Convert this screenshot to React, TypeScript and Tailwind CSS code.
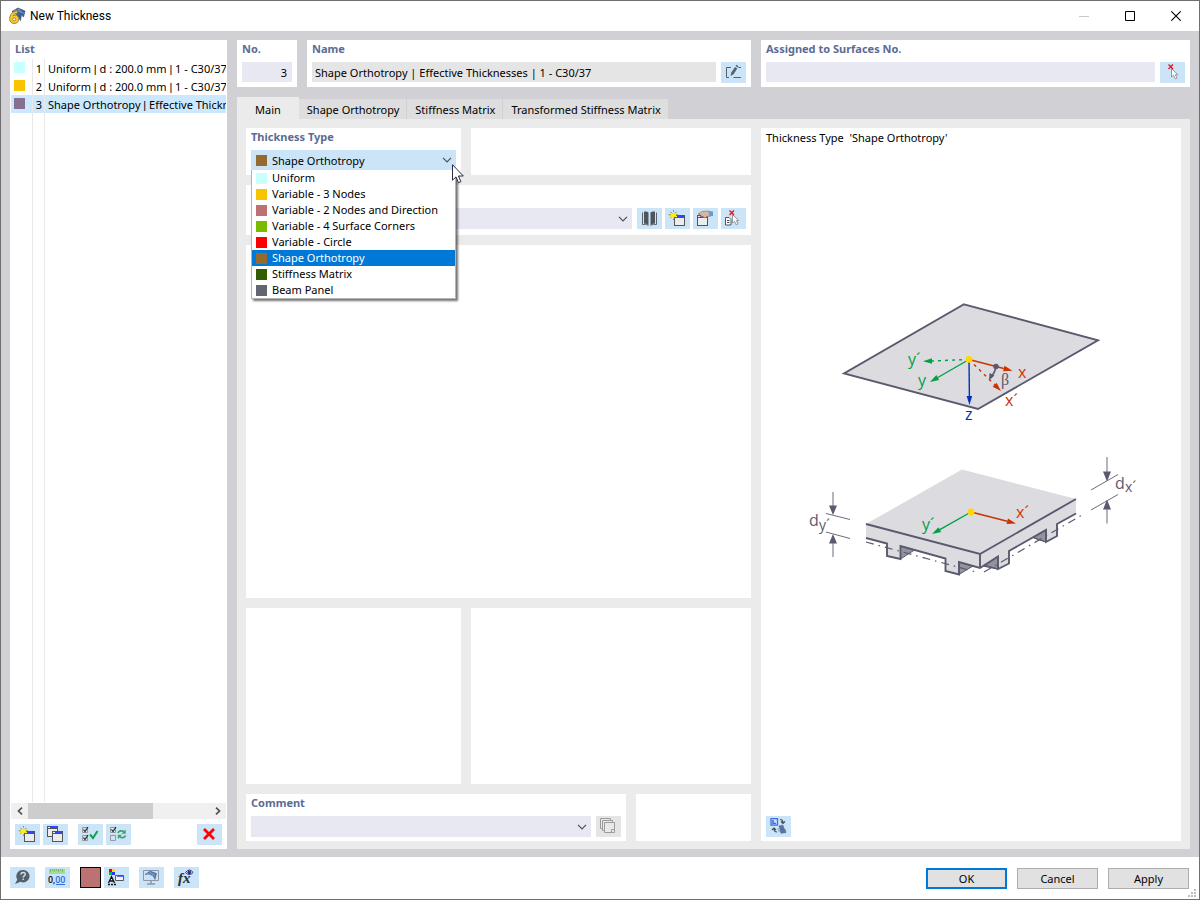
import { Fragment, useState, type KeyboardEvent, type ReactNode } from "react";

const thicknessTypes = [
  { name: "Uniform", swatch: "bg-[#c8ffff]" },
  { name: "Variable - 3 Nodes", swatch: "bg-[#f8c400]" },
  { name: "Variable - 2 Nodes and Direction", swatch: "bg-[#bc7272]" },
  { name: "Variable - 4 Surface Corners", swatch: "bg-[#7aba00]" },
  { name: "Variable - Circle", swatch: "bg-[#ff0000]" },
  { name: "Shape Orthotropy", swatch: "bg-[#946a2e]" },
  { name: "Stiffness Matrix", swatch: "bg-[#335c00]" },
  { name: "Beam Panel", swatch: "bg-[#62666e]" },
];

const listItems = [
  { no: 1, parts: ["Uniform ", " d : 200.0 mm ", " 1 - C30/37"], swatch: "bg-[#c8ffff]" },
  { no: 2, parts: ["Uniform ", " d : 200.0 mm ", " 1 - C30/37"], swatch: "bg-[#f8c400]" },
  { no: 3, parts: ["Shape Orthotropy ", " Effective Thicknesses"], swatch: "bg-[#85708f]" },
];

const tabs = ["Main", "Shape Orthotropy", "Stiffness Matrix", "Transformed Stiffness Matrix"];

function Icon({ children }: { children: ReactNode }) {
  return (
    <svg width="25" height="21" viewBox="0 0 25 21" fill="none" aria-hidden="true">
      {children}
    </svg>
  );
}

function Tool({ label, disabled, children }: { label: string; disabled?: boolean; children: ReactNode }) {
  return (
    <button
      type="button"
      aria-label={label}
      disabled={disabled}
      className={`h-[21px] w-[25px] shrink-0 ${disabled ? "bg-[#e5e5e5]" : "bg-[#cce4f7]"}`}
    >
      <Icon>{children}</Icon>
    </button>
  );
}

function Chevron() {
  return (
    <svg width="10" height="6" viewBox="0 0 10 6" fill="none" stroke="#505050" strokeWidth="1.2" aria-hidden="true">
      <path d="M1 .8 5 4.8 9 .8" />
    </svg>
  );
}

function MiniWindow({ x, y, s = 10 }: { x: number; y: number; s?: number }) {
  return (
    <g>
      <rect x={x + 0.5} y={y + 0.5} width={s} height={s} fill="#ececec" stroke="#555" />
      <path d={`M${x} ${y + 2.5}h${s + 1}`} stroke="#555" />
      <path d={`M${x + 3} ${y + 1}h${s - 3}`} stroke="#2b45ff" strokeWidth="2" />
    </g>
  );
}

function NewIcon() {
  return (
    <>
      <MiniWindow x={9} y={7} />
      <path d="M8.500 2v10M3.800 6.800h9.400M5.500 3.800l6 6M11.500 3.800l-6 6" stroke="#8f8a3a" strokeWidth="1" />
      <path d="m8.500 3 1 2.500 2.800-.5-1.500 2 1.500 2-2.800-.300-1 2.600-1-2.600-2.800.300 1.500-2-1.500-2 2.800.5z" fill="#fff200" />
    </>
  );
}

function Pointer() {
  return (
    <path
      d="M11.500 6.500v8.500l2-1.700 1.800 3.600 1.700-.9-1.700-3.300h2.600z"
      fill="#fff"
      stroke="#888c94"
      strokeWidth=".9"
    />
  );
}

function RedCross() {
  return <path d="m8.500 2.500 4.500 4.500m0-4.500L8.500 7" stroke="#e8101c" strokeWidth="1.3" />;
}

function CheckBoxes({ second }: { second: boolean }) {
  return (
    <g>
      <path d="M4.500 3.500h5v5h-5zM4.500 11.500h5v5h-5z" stroke="#999" />
      <path d="m5.500 5.500 1.500 2 3-4.500" stroke="#222" strokeWidth="1.100" />
      {second && <path d="m5.500 13.500 1.500 2 3-4.500" stroke="#222" strokeWidth="1.100" />}
    </g>
  );
}

function Panel({ className = "", children }: { className?: string; children?: ReactNode }) {
  return <section className={`min-w-0 bg-white ${className}`}>{children}</section>;
}

function Caption({ htmlFor, children }: { htmlFor: string; children: ReactNode }) {
  return (
    <label htmlFor={htmlFor} className="block h-[22px] pt-px text-[11px] leading-4 font-bold text-[#5c6b94]">
      {children}
    </label>
  );
}

function EmptySelect({ id, label }: { id: string; label?: string }) {
  return (
    <div className="relative min-w-0 flex-1">
      <select id={id} aria-label={label} className="block h-[21px] w-full appearance-none bg-[#e8e8f2] px-1 outline-none" />
      <span className="pointer-events-none absolute top-[8px] right-1">
        <Chevron />
      </span>
    </div>
  );
}

function AppLogo() {
  return (
    <svg width="18" height="18" viewBox="0 0 18 18" fill="none" aria-hidden="true">
      <path d="M4 4.500 10 1l7 3-1.500 6-2-2.500-1 6-4-6z" fill="#3f6295" stroke="#35507c" strokeWidth=".7" />
      <path d="M7 3l7 2.500M10 1.800l6 5M5 4.500l7-2" stroke="#8fa9cc" strokeWidth=".7" />
      <path
        d="M9.600 3.800C4.500 4.300 1.600 7.600 1.700 11.800c.1 3 1.900 4.700 4.500 4.700 2.700 0 4.600-1.800 4.600-4.400 0-2.300-1.500-3.900-3.600-3.900-.9 0-1.600.2-2.100.6.600-1.300 2-2.300 4.500-2.500z"
        fill="#fbcb2a"
        stroke="#8a701c"
        strokeWidth=".8"
      />
      <circle cx="6.200" cy="12.300" r="1.500" fill="#fff" stroke="#8a701c" strokeWidth=".8" />
    </svg>
  );
}

function TitleBar() {
  const control = "flex h-full w-[46px] items-center justify-center";
  return (
    <header className="flex h-[30px] shrink-0 items-center bg-white pl-[7px]">
      <AppLogo />
      <h1 className="ml-1 flex-1 font-['Roboto',sans-serif] text-[12px] leading-4">New Thickness</h1>
      <button type="button" aria-label="Minimize" disabled className={control}>
        <svg width="10" height="10" viewBox="0 0 10 10" stroke="#c8c8c8"><path d="M0 5.500h10" /></svg>
      </button>
      <button type="button" aria-label="Maximize" className={control}>
        <svg width="10" height="10" viewBox="0 0 10 10" fill="none" stroke="#000"><path d="M.5.5h9v9h-9z" /></svg>
      </button>
      <button type="button" aria-label="Close" className={control}>
        <svg width="10" height="10" viewBox="0 0 10 10" stroke="#000" strokeWidth="1.100"><path d="m.3.3 9.400 9.400m0-9.400L.3 9.700" /></svg>
      </button>
    </header>
  );
}

function ListPanel() {
  return (
    <Panel className="flex w-[217px] shrink-0 flex-col px-px pb-1">
      <h2 className="h-[19px] pt-px pl-1 text-[11px] leading-4 font-bold text-[#5c6b94]">List</h2>
      <div className="flex flex-1 flex-col overflow-hidden">
        <ul>
          {listItems.map((item) => (
            <li
              key={item.no}
              className={`flex h-[18px] text-[11px] leading-[20px] ${item.no === 3 ? "bg-[#cce8ff]" : ""}`}
            >
              <span className="w-[22px] shrink-0 border-r border-[#e8e8e8] pt-[3px] pl-[3px]">
                <span className={`block size-[11px] ${item.swatch}`} />
              </span>
              <span className="w-3 shrink-0 border-r border-[#e8e8e8] pr-0.5 text-right">{item.no}</span>
              <span className="overflow-hidden pl-[3px] whitespace-pre">
                {item.parts.map((part, i) => (
                  <Fragment key={i}>
                    {i > 0 && <span className="font-['Liberation_Sans',sans-serif]">|</span>}
                    {part}
                  </Fragment>
                ))}
              </span>
            </li>
          ))}
        </ul>
        <div className="flex flex-1">
          <span className="w-[22px] border-r border-[#e8e8e8]" />
          <span className="w-3 border-r border-[#e8e8e8]" />
        </div>
      </div>
      <div className="mt-px flex h-4 bg-[#f0f0f0]">
        <button type="button" aria-label="Scroll left" className="flex w-[17px] items-center justify-center">
          <svg width="6" height="8" viewBox="0 0 6 8" fill="none" stroke="#505050" strokeWidth="1.700"><path d="M5 .7 1.500 4 5 7.300" /></svg>
        </button>
        <div className="flex flex-1"><span className="w-[69%] bg-[#cdcdcd]" /></div>
        <button type="button" aria-label="Scroll right" className="flex w-[17px] items-center justify-center">
          <svg width="6" height="8" viewBox="0 0 6 8" fill="none" stroke="#505050" strokeWidth="1.700"><path d="M1 .7 4.500 4 1 7.300" /></svg>
        </button>
      </div>
      <div className="flex justify-between px-1 pt-[5px]">
        <div className="flex gap-[10px]">
          <div className="flex gap-[3px]">
            <Tool label="New"><NewIcon /></Tool>
            <Tool label="Copy"><MiniWindow x={4} y={2} /><MiniWindow x={9} y={7} /></Tool>
          </div>
          <div className="flex gap-[3px]">
            <Tool label="Select all">
              <CheckBoxes second />
              <path d="m12 10.500 3 3.500 4.500-7" stroke="#12a24b" strokeWidth="2" />
            </Tool>
            <Tool label="Invert selection">
              <CheckBoxes second={false} />
              <path d="M12 9c.8-2.200 3.500-2.700 6-1.400M19.500 11.500c-.8 2.200-3.500 2.700-6 1.400" stroke="#3aa66a" strokeWidth="1.800" />
              <path d="M19.700 5.500v4.200h-4.200zM11.800 15v-4.200H16z" fill="#3aa66a" />
            </Tool>
          </div>
        </div>
        <Tool label="Delete"><path d="m7 5 10 10M17 5 7 15" stroke="#f00" strokeWidth="2.800" /></Tool>
      </div>
    </Panel>
  );
}

function ThicknessTypeField() {
  const [open, setOpen] = useState(true);
  const [value, setValue] = useState("Shape Orthotropy");
  const index = thicknessTypes.findIndex((t) => t.name === value);

  function onKeyDown(e: KeyboardEvent) {
    const step = e.key === "ArrowDown" ? 1 : e.key === "ArrowUp" ? -1 : 0;
    const next = thicknessTypes[index + step];
    if (step && next) {
      e.preventDefault();
      setValue(next.name);
    } else if (e.key === "Escape" || e.key === "Enter") {
      setOpen(false);
    }
  }

  return (
    <Panel className="px-[5px] pb-[5px]">
      <Caption htmlFor="thickness-type">Thickness Type</Caption>
      <div className="relative">
        <select
          id="thickness-type"
          value={value}
          onChange={(e) => setValue(e.target.value)}
          onKeyDown={onKeyDown}
          onMouseDown={(e) => {
            e.preventDefault();
            setOpen(!open);
          }}
          className="block h-5 w-full appearance-none bg-[#cce4f7] pt-px pl-[21px] text-[11px] leading-4 outline-none"
        >
          <option>{value}</option>
        </select>
        <span className={`pointer-events-none absolute top-[5px] left-[5px] size-[11px] ${thicknessTypes[index].swatch}`} />
        <span className="pointer-events-none absolute top-[7px] right-1"><Chevron /></span>
        {open && (
          <ul
            role="listbox"
            aria-label="Thickness Type"
            className="absolute top-full left-0 z-10 w-full border-x border-b border-[#b4b4b4] bg-white text-[11px] leading-4 shadow-[2px_2px_2px_rgba(0,0,0,0.55)]"
          >
            {thicknessTypes.map((t) => (
              <li
                key={t.name}
                role="option"
                aria-selected={t.name === value}
                onClick={() => {
                  setValue(t.name);
                  setOpen(false);
                }}
                className={`flex h-4 items-center gap-[5px] pl-1 whitespace-nowrap ${t.name === value ? "bg-[#0078d7] text-white" : ""}`}
              >
                <span className={`size-[11px] shrink-0 ${t.swatch}`} />
                {t.name}
              </li>
            ))}
          </ul>
        )}
        <svg
          className="pointer-events-none absolute top-[14px] -right-2 z-20"
          width="12"
          height="20"
          viewBox="0 0 12 20"
          aria-hidden="true"
        >
          <path d="M.5.700v15.500l3.500-3.300 2.500 5.800 2.400-1-2.500-5.700h4.900z" fill="#fff" stroke="#15152a" strokeWidth=".9" />
        </svg>
      </div>
    </Panel>
  );
}

function Arrow({ from, to, color, dash }: { from: [number, number]; to: [number, number]; color: string; dash?: string }) {
  const angle = Math.atan2(to[1] - from[1], to[0] - from[0]);
  const bx = to[0] - 9 * Math.cos(angle);
  const by = to[1] - 9 * Math.sin(angle);
  const ox = 2.8 * Math.sin(angle);
  const oy = -2.8 * Math.cos(angle);
  return (
    <g>
      <path d={`M${from[0]} ${from[1]}L${bx} ${by}`} stroke={color} strokeWidth="1.4" strokeDasharray={dash} />
      <path d={`M${to[0]} ${to[1]}L${bx + ox} ${by + oy}L${bx - ox} ${by - oy}z`} fill={color} />
    </g>
  );
}

function Diagram() {
  const ink = "#5a5a6e";
  const red = "#cc3300";
  const green = "#00a046";
  const blue = "#0033bb";
  return (
    <svg
      viewBox="800 290 342 300"
      className="mx-auto w-[342px] max-w-full font-['Open_Sans',sans-serif] text-[16px]"
      fill="none"
      role="img"
      aria-label="Shape orthotropy axes"
    >
      <path d="m964 304.300 134 36-120 68.700-134-35.500z" fill="#dcdce0" stroke={ink} strokeWidth="1.900" />
      <Arrow from={[969, 359.500]} to={[930, 382]} color={green} />
      <Arrow from={[969, 359.500]} to={[923, 361.300]} color={green} dash="3 4" />
      <Arrow from={[969, 359.500]} to={[969.500, 405]} color={blue} />
      <Arrow from={[969, 359.500]} to={[1012.500, 370.700]} color={red} />
      <Arrow from={[969, 359.500]} to={[1001, 391]} color={red} dash="3 4" />
      <path d="M996 367q-1 5-4 9" stroke={ink} strokeWidth="1.600" />
      <path d="m989 380.500.5-7.500 5 2.600z" fill={ink} />
      <circle cx="996" cy="366.500" r="2.800" fill={ink} />
      <circle cx="969" cy="359.300" r="3.400" fill="#ffd800" />
      <text x="908" y="365" fill={green}>y´</text>
      <text x="918" y="386" fill={green}>y</text>
      <text x="1018" y="378" fill={red}>x</text>
      <text x="1005" y="406" fill={red}>x´</text>
      <text x="965" y="420" fill={blue}>z</text>
      <text x="1001" y="385" fill={ink} className="font-['Liberation_Serif',serif] text-[16px]">β</text>

      <path
        d="m962 469.500 114 29.500v15l-19 10.500v11.500l-11 6v-12l-37 21v13l-11 5.500V556.500L980 568l-21-6v12.500l-13.500-3.500v-12l-45-12.500V559l-13.500-3V543.500L866 538v-14z"
        fill="#dcdce0"
      />
      <g fill="#93939f" stroke={ink} strokeWidth="1">
        <path d="m900.500 546 14 4-14 9zM959 562l14 4-14 8.500zM998 556.500 984.500 565l13.500 4zM1046 530l-13 7.500 13 4.500z" />
      </g>
      <g stroke={ink} strokeWidth="1.900">
        <path d="m866 524 114 30 96-55M980 554v14" />
        <path d="m866 538 21 5.500V556l13.500 3v-13l45 12.500V571l13.500 3.500V562l21 6 18-11.500V569l11-5.500v-12.500l37-21v12l11-6v-12l19-10.500" />
        <path d="m984 566 14 3M1034 538l12 4" strokeWidth="1.300" />
      </g>
      <path d="m866 542 110 30M984 572l99-57.500" stroke={ink} strokeWidth="1.200" strokeDasharray="8 5 1.500 5" />
      <Arrow from={[971, 512]} to={[1016, 523.500]} color={red} />
      <Arrow from={[971, 512]} to={[932, 534]} color={green} />
      <circle cx="971" cy="512" r="3.400" fill="#ffd800" />
      <text x="922" y="530" fill={green}>y´</text>
      <text x="1016" y="518" fill={red}>x´</text>
      <g stroke={ink} strokeWidth=".9">
        <path d="M833 492v15M833 557v-15M826 513.500l24 6M826 532l24 6.500M1107 457v15M1107 523.500v-15M1091 490l27-15.500M1091 510l27-15.500" />
      </g>
      <path d="m833 515-4-9.500h8zM833 534l-4 9.500h8zM1107 481.500l-4-10h8zM1107 499.500l-4 10h8z" fill={ink} />
      <text x="809" y="526" fill={ink}>d</text>
      <text x="819" y="530" fill={ink} className="text-[14px]">y´</text>
      <text x="1115" y="489" fill={ink}>d</text>
      <text x="1125" y="492" fill={ink} className="text-[14px]">x´</text>
    </svg>
  );
}

function MainTab() {
  return (
    <div className="grid flex-1 grid-cols-[minmax(0,505fr)_minmax(0,420fr)] gap-[10px] bg-[#ebebeb] px-[9px] pt-[9px] pb-2">
      <div className="flex flex-col gap-[10px]">
        <div className="grid h-[47px] grid-cols-[minmax(0,215fr)_minmax(0,280fr)] gap-[10px]">
          <ThicknessTypeField />
          <Panel />
        </div>
        <Panel className="px-[5px] pt-[23px] pb-[6px]">
          <div className="flex gap-[5px]">
            <EmptySelect id="material" label="Material" />
            <div className="flex gap-[3px]">
              <Tool label="Library">
                <path d="M7 3.500q3-.500 4.500 1V17Q10 15.500 7 15.500zM18 3.500q-3-.500-4.500 1V17q1.500-1.500 4.500-1.500z" fill="#4c545c" />
                <path d="M5.500 4.500v12q3.500-.800 6 .800M19.500 4.500v12q-3.500-.800-6 .800" stroke="#5b646c" />
              </Tool>
              <Tool label="New material"><NewIcon /></Tool>
              <Tool label="Edit material">
                <MiniWindow x={4} y={7} />
                <path d="M5 6 9 3.500l6-.5 3 1v4l-4 .500-2 1.500-3-2-1.500 1L8 7z" fill="#d9b79d" stroke="#8a6a52" strokeWidth=".6" />
                <path d="m15.500 3 4.500.5V8l-4 .300z" fill="#6a9bd0" />
              </Tool>
              <Tool label="Select material">
                <path d="M4.500 9.500h3.500l2 2v5.500H4.500z" fill="#fff" stroke="#555" />
                <path d="M6 12.500h2.500M6 14.500h2.500" stroke="#555" />
                <Pointer />
                <RedCross />
              </Tool>
            </div>
          </div>
        </Panel>
        <Panel className="flex-[353]" />
        <div className="grid flex-[176] grid-cols-[minmax(0,215fr)_minmax(0,280fr)] gap-[10px]">
          <Panel />
          <Panel />
        </div>
        <div className="grid grid-cols-[minmax(0,380fr)_minmax(0,115fr)] gap-[10px]">
          <Panel className="px-[5px] pb-1">
            <Caption htmlFor="comment">Comment</Caption>
            <div className="flex gap-[5px]">
              <EmptySelect id="comment" />
              <Tool label="Comment templates" disabled>
                <g stroke="#9c9c9c" fill="#e9e9e9">
                  <path d="M4.500 2.500h10v10h-10z" />
                  <path d="M6.500 4.500h10v10h-10z" />
                  <path d="M8.500 6.500h10v10h-10z" />
                  <path d="M18.500 13.500h-3v3" />
                </g>
              </Tool>
            </div>
          </Panel>
          <Panel />
        </div>
      </div>
      <Panel className="flex flex-col px-[5px] pb-1">
        <p className="pt-[2px] text-[11px] leading-4 whitespace-pre">Thickness Type  'Shape Orthotropy'</p>
        <div className="flex flex-1 items-start pt-36">
          <Diagram />
        </div>
        <Tool label="Switch picture">
          <path d="M5 2.700h6.500v6.500H5z" fill="#cfe0ff" stroke="#3f6fe8" strokeWidth="1.300" />
          <path d="M7 4v3.500h3" stroke="#3f6fe8" strokeWidth="1.600" />
          <path d="M14 3.500c2 0 3 1.200 3 3.500m-2-1.500 2 2 2-2M11 16c-2 0-3-1.200-3-3.500m-2 1.500 2-2 2 2" stroke="#4a5058" strokeWidth="1.200" />
          <path d="m13 10 4-.800 1 3.800-4 .500zM14 14l5-1 1 3.500-5 .800z" fill="#5876a8" stroke="#3e5681" strokeWidth=".5" />
          <path d="m11.500 12 2 .5.500 4-2-1z" fill="#9db5d8" />
        </Tool>
      </Panel>
    </div>
  );
}

function Footer() {
  const dialogButton = "h-[21px] w-[81px] bg-[#e1e1e1] text-[11px] leading-4";
  return (
    <footer className="relative flex h-[42px] shrink-0 items-start bg-white pt-[10px] pr-[10px] pl-[9px]">
      <div className="flex flex-1 gap-[10px]">
        <Tool label="Help">
          <path d="M13 3a6.200 6.200 0 1 1-2.500 11.700L5 17l2.300-4.500A6.200 6.200 0 0 1 13 3z" fill="#566069" />
          <path d="M11 7.500c0-1.500 1-2 2.200-2s2.100.7 2.100 1.800c0 1.500-2.100 1.600-2.100 3.200m0 1v1.500" stroke="#cce4f7" strokeWidth="1.400" />
        </Tool>
        <Tool label="Units and decimal places">
          <path d="M4 2h16v5H4z" fill="#a3dc92" />
          <path d="M5.500 2v3M7.500 2v2M9.500 2v3M11.500 2v2M13.500 2v3M15.500 2v2M17.500 2v3" stroke="#6cae60" strokeWidth=".7" />
          <text x="3" y="15.500" className="font-['Roboto',sans-serif] text-[9px] font-medium" fill="#111">
            0,<tspan fill="#2f6fe0">00</tspan>
          </text>
          <path d="M11 17.500h9" stroke="#2f6fe0" />
        </Tool>
        <div className="flex gap-[3px]">
          <button type="button" aria-label="Color" className="size-[21px] border border-black bg-[#bc7272]" />
          <Tool label="Display properties">
            <path d="M5 2h3v3H5z" fill="#e00" />
            <path d="M8 2h3v3H8z" fill="#fd0" />
            <path d="M5 5h3v3H5z" fill="#0b3" />
            <path d="M8 5h3v3H8z" fill="#23f" />
            <path d="M4.500 16 7.500 9.500l3 6.500M5.500 14h4M4 17.500h2m1 0h2m1 0h2" stroke="#111" strokeWidth="1.300" />
            <path d="M11.500 8.500h8v5h-8z" fill="#f2f2f2" stroke="#555" />
            <path d="M13 9h6" stroke="#2b45ff" strokeWidth="1.500" />
          </Tool>
        </div>
        <Tool label="View">
          <path d="M4.500 3.500h15v10h-15z" fill="#cfe2f3" stroke="#8a98a6" />
          <path d="M12 14v2.500M8 17h8" stroke="#8a98a6" strokeWidth="1.500" />
          <path d="m6 7.500 5-3.500 6.500 2.500-1.500 6q-1-4-4-4.500-3-1.500-6-.5z" fill="#4b7ab0" stroke="#355b8a" strokeWidth=".5" />
          <path d="m8 6 6 3M10 4.500l6 4" stroke="#a3c0df" strokeWidth=".6" />
        </Tool>
        <Tool label="Formula">
          <text x="4" y="15.500" className="font-['Liberation_Serif',serif] text-[15px] font-bold italic" fill="#2a2d33">
            fx
          </text>
          <path d="M11.500 5.500q3.800-5 7.600 0-3.800 4-7.600 0z" fill="#fff" stroke="#2d2f80" />
          <circle cx="15.300" cy="5.300" r="1.900" fill="#2d2f80" />
        </Tool>
      </div>
      <div className="flex gap-[10px] pt-px">
        <button type="button" className={`${dialogButton} border-2 border-[#0078d7]`}>OK</button>
        <button type="button" className={`${dialogButton} border border-[#adadad]`}>Cancel</button>
        <button type="button" className={`${dialogButton} border border-[#adadad]`}>Apply</button>
      </div>
      <svg className="absolute right-[3px] bottom-[2px]" width="8" height="8" viewBox="0 0 8 8" fill="#bfbfbf" aria-hidden="true">
        <path d="M6 0h2v2H6zM6 3h2v2H6zM3 3h2v2H3zM6 6h2v2H6zM3 6h2v2H3zM0 6h2v2H0z" />
      </svg>
    </footer>
  );
}

export default function App() {
  const [tab, setTab] = useState("Main");
  return (
    <div className="flex min-h-screen flex-col border border-[#6f6f6f] bg-[#d1d0d5] font-['Noto_Sans','Open_Sans',sans-serif] text-[11px] text-black">
      <TitleBar />
      <main className="flex flex-1 gap-[10px] px-[9px] pt-[9px] pb-2">
        <ListPanel />
        <div className="flex min-w-0 flex-1 flex-col">
          <div className="grid grid-cols-[minmax(0,514fr)_minmax(0,429fr)] gap-[10px]">
            <div className="flex gap-[10px]">
              <Panel className="w-[60px] px-[5px] pb-[5px]">
                <Caption htmlFor="number">No.</Caption>
                <input id="number" defaultValue="3" className="block h-5 w-full bg-[#e8e8f2] pt-px pr-[5px] text-right outline-none" />
              </Panel>
              <Panel className="flex-1 px-[5px] pb-1">
                <Caption htmlFor="name">Name</Caption>
                <div className="flex gap-[5px]">
                  <input
                    id="name"
                    readOnly
                    value="Shape Orthotropy | Effective Thicknesses | 1 - C30/37"
                    className="h-5 min-w-0 flex-1 bg-[#e5e5e5] pt-px pl-[3px] outline-none"
                  />
                  <Tool label="Edit name">
                    <path d="M10 5.500H5.500v10H8M12.500 15.500H20M17.500 5.500H20" stroke="#566069" />
                    <path d="m9.500 14 .8-3.500L14 5l2.300 1.400-3.700 5.800z" fill="#59636b" />
                    <path d="m14.500 4 .8-1.200 2.300 1.400-.8 1.200z" fill="#59636b" />
                  </Tool>
                </div>
              </Panel>
            </div>
            <Panel className="px-[5px] pb-1">
              <Caption htmlFor="assigned">Assigned to Surfaces No.</Caption>
              <div className="flex gap-[5px]">
                <input id="assigned" className="h-5 min-w-0 flex-1 bg-[#e8e8f2] px-1 outline-none" />
                <Tool label="Select surfaces"><Pointer /><RedCross /></Tool>
              </div>
            </Panel>
          </div>
          <div role="tablist" className="mt-[10px] flex h-[22px] items-end">
            {tabs.map((name) => (
              <button
                key={name}
                type="button"
                role="tab"
                aria-selected={tab === name}
                onClick={() => setTab(name)}
                className={
                  tab === name
                    ? "h-[22px] bg-[#ebebeb] px-[18px] pt-1 leading-4"
                    : "h-5 border-r border-[#d1d0d5] bg-[#dedede] pt-px pr-[7px] pl-2 leading-4"
                }
              >
                {name}
              </button>
            ))}
          </div>
          <MainTab />
        </div>
      </main>
      <Footer />
    </div>
  );
}
